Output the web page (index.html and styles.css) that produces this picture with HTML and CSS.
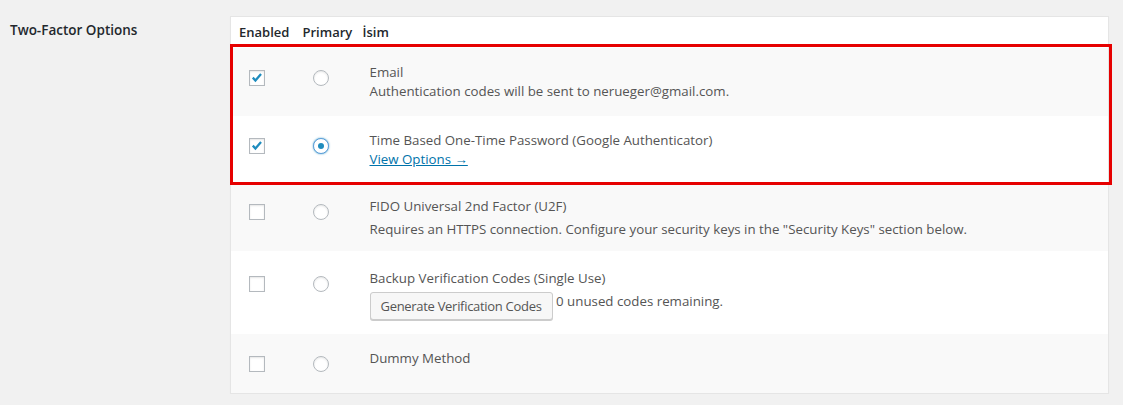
FILE: index.html
```html
<!DOCTYPE html>
<html lang="tr">
<head>
  <meta charset="UTF-8" />
  <title>Two-Factor Options</title>
  <link rel="stylesheet" href="styles.css">
</head>
<body>

  <div class="form-row">
    <div class="form-label">Two-Factor Options</div>

    <div class="table-wrap">
      <table class="providers">
        <colgroup>
          <col class="col-enabled">
          <col class="col-primary">
          <col>
        </colgroup>
        <thead>
          <tr><th>Enabled</th><th>Primary</th><th>İsim</th></tr>
        </thead>
        <tbody>
          <tr class="alt">
            <td class="cell-check"><span class="box is-on"><svg viewBox="0 0 16 16"><path d="M3.2 7.6l3 3.2 6.4-7.4" /></svg></span></td>
            <td class="cell-check"><span class="radio"></span></td>
            <td class="cell-name">
              Email
              <div>Authentication codes will be sent to nerueger@gmail.com.</div>
            </td>
          </tr>
          <tr>
            <td class="cell-check"><span class="box is-on"><svg viewBox="0 0 16 16"><path d="M3.2 7.6l3 3.2 6.4-7.4" /></svg></span></td>
            <td class="cell-check"><span class="radio is-on"></span></td>
            <td class="cell-name">
              Time Based One-Time Password (Google Authenticator)
              <div><a href="#">View Options →</a></div>
            </td>
          </tr>
          <tr class="alt tight">
            <td class="cell-check"><span class="box"></span></td>
            <td class="cell-check"><span class="radio"></span></td>
            <td class="cell-name">
              FIDO Universal 2nd Factor (U2F)
              <p class="desc">Requires an HTTPS connection. Configure your security keys in the "Security Keys" section below.</p>
            </td>
          </tr>
          <tr class="loose">
            <td class="cell-check"><span class="box"></span></td>
            <td class="cell-check"><span class="radio"></span></td>
            <td class="cell-name">
              Backup Verification Codes (Single Use)
              <p class="desc"><button type="button" class="button">Generate Verification Codes</button> 0 unused codes remaining.</p>
            </td>
          </tr>
          <tr class="alt">
            <td class="cell-check"><span class="box"></span></td>
            <td class="cell-check"><span class="radio"></span></td>
            <td class="cell-name">Dummy Method</td>
          </tr>
        </tbody>
      </table>

      <div class="highlight"></div>
    </div>
  </div>

</body>
</html>
```

FILE: styles.css
```css
body {
  margin: 0;
  background: #f1f1f1;
  font-family: "Open Sans", "Noto Sans", sans-serif;
  font-size: 13px;
  line-height: 19px;
  color: #444;
}

.form-row {
  display: flex;
  padding: 16px 14px 0 10px;
}

.form-label {
  width: 220px;
  flex-shrink: 0;
  padding-top: 5px;
  font-size: 13.5px;
  font-weight: 600;
  color: #23282d;
}

.table-wrap {
  flex: 1;
  position: relative;
}

.providers {
  width: 100%;
  table-layout: fixed;
  border-collapse: collapse;
  border: 1px solid #e5e5e5;
  background: #fff;
  box-shadow: 0 1px 1px rgba(0, 0, 0, 0.04);
}

.col-enabled { width: 64px; }
.col-primary { width: 60px; }

.providers th {
  text-align: left;
  font-weight: 600;
  color: #23282d;
  padding: 6px 0 6px 8px;
  white-space: nowrap;
}

.providers td {
  vertical-align: top;
  padding: 15px 10px 15px 15px;
  font-size: 13.3px;
  color: #555;
}

.providers tr.alt td { background: #f9f9f9; }

.providers tr.tight td { padding-top: 13px; padding-bottom: 12px; }
.providers tr.loose td { padding-top: 18px; padding-bottom: 14px; }

.providers td.cell-check {
  padding-left: 18px;
  padding-right: 0;
}

.desc {
  margin: 4px 0 0;
}

.box, .radio {
  display: block;
  width: 16px;
  height: 16px;
  margin: 7px 0 6px;
  box-sizing: border-box;
  border: 1px solid #b4b9be;
  background: #fff;
  box-shadow: inset 0 1px 2px rgba(0, 0, 0, 0.1);
}

.box svg {
  display: block;
  width: 14px;
  height: 14px;
}

.box path {
  fill: none;
  stroke: #1e8cbe;
  stroke-width: 2.6;
}

.radio {
  border-radius: 50%;
  position: relative;
}

.radio.is-on {
  border-color: #5b9dd9;
  box-shadow: 0 0 2px rgba(30, 140, 190, 0.8);
}

.radio.is-on::before {
  content: "";
  position: absolute;
  left: 4px;
  top: 4px;
  width: 6px;
  height: 6px;
  border-radius: 50%;
  background: #1e8cbe;
}

a {
  color: #0073aa;
}

.button {
  font-family: inherit;
  font-size: 13px;
  line-height: 26px;
  height: 28px;
  padding: 0 10px 1px;
  margin: 0;
  letter-spacing: -0.3px;
  color: #555;
  background: #f7f7f7;
  border: 1px solid #ccc;
  border-radius: 3px;
  box-shadow: 0 1px 0 #ccc;
  vertical-align: top;
  cursor: pointer;
}

/* annotation drawn over the first two rows */
.highlight {
  position: absolute;
  left: 0;
  top: 28px;
  width: calc(100% + 3px);
  height: 141px;
  box-sizing: border-box;
  border: 3px solid #e60000;
  pointer-events: none;
}
```
